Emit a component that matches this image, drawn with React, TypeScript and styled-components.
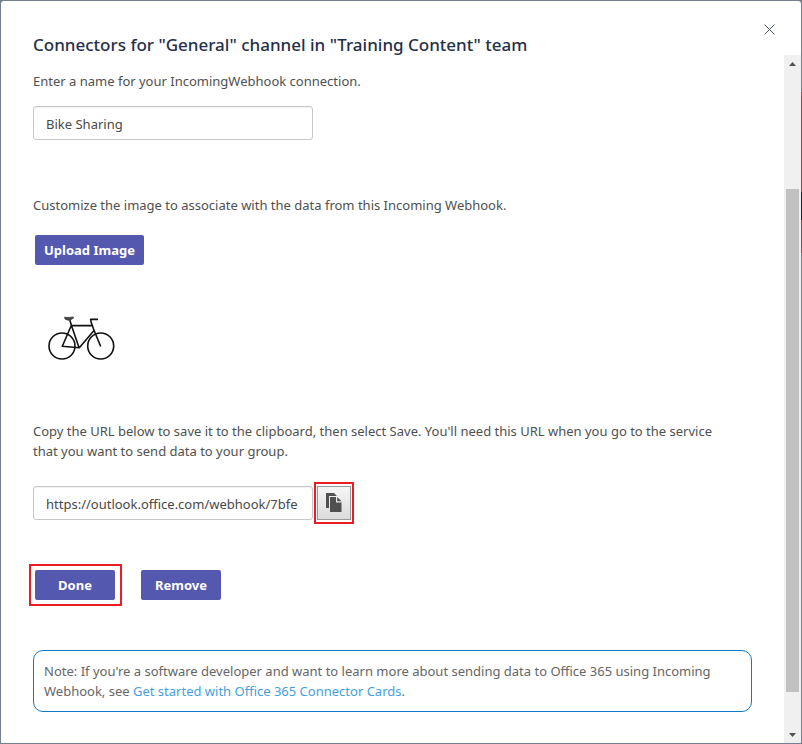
import React, { useState } from "react";
import styled, { createGlobalStyle } from "styled-components";

const GlobalStyle = createGlobalStyle`
  *, *::before, *::after { box-sizing: border-box; }
  body { margin: 0; }
  body, button, input {
    font-family: "Noto Sans", "Open Sans", sans-serif;
    font-size: 13px;
    line-height: 20px;
  }
`;

const Backdrop = styled.div`
  display: flex;
  min-height: 100vh;
  padding: 1px;
  background:
    linear-gradient(transparent 0 92px, #7b5560 92px 192px, #17212c 192px 220px, #6d5560 220px 253px, transparent 253px)
      right / 1px 100% no-repeat,
    #757f8d;
`;

const Dialog = styled.main`
  flex: 1;
  min-width: 0;
  display: flex;
  flex-direction: column;
  background: #fff;
  border-radius: 3px 3px 0 0;
`;

const Header = styled.header`
  display: flex;
  justify-content: space-between;
  align-items: flex-start;
  padding: 16px 20px 0 32px;
`;

const Title = styled.h1`
  margin: 18px 0 0;
  font-size: 17px;
  line-height: 20px;
  font-weight: 500;
  color: #252f49;
`;

const CloseButton = styled.button`
  display: grid;
  place-items: center;
  width: 24px;
  height: 24px;
  padding: 0;
  border: 0;
  background: none;
  color: #4c5570;
`;

const Body = styled.div`
  flex: 1;
  display: flex;
`;

const Form = styled.form`
  flex: 1;
  min-width: 0;
  display: flex;
  flex-direction: column;
  align-items: flex-start;
  padding: 16px 32px 31px;
  color: #505050;
`;

const Field = styled.div`
  display: flex;
  flex-direction: column;
  align-items: flex-start;
  gap: 15px;
  margin-bottom: 55px;
`;

const Text = styled.p`
  margin: 0 0 20px;
`;

const TextInput = styled.input`
  width: 280px;
  height: 34px;
  padding: 2px 12px 0;
  border: 1px solid #c8c8c8;
  border-radius: 3px;
  background: #fff;
  box-shadow: inset 0 1px 1px #f0f0f0;
  color: #484848;
`;

const PrimaryButton = styled.button<{ $wide?: boolean }>`
  height: 30px;
  width: ${(p) => (p.$wide ? "80px" : "auto")};
  padding: 0 9px;
  border: 0;
  border-radius: 2px;
  background: #5558af;
  color: #fff;
  font-weight: 700;
  white-space: nowrap;
`;

const UploadButton = styled(PrimaryButton)`
  margin-left: 2px;
`;

const Preview = styled.div`
  margin: 45px 0 55px 12px;
  height: 56px;
`;

const UrlText = styled.label`
  display: block;
  max-width: 700px;
  margin-bottom: 21px;
`;

const UrlRow = styled.div`
  display: flex;
  align-items: center;
  gap: 1px;
  margin-bottom: 40px;
`;

const Callout = styled.span<{ $pad: string }>`
  display: flex;
  border: 2px solid #ec1c24;
  padding: ${(p) => p.$pad};
`;

const CopyButton = styled.button`
  display: grid;
  place-items: center;
  width: 34px;
  height: 34px;
  padding: 0;
  border: 1px solid #999;
  background: linear-gradient(#f5f5f5, #dcdcdc);
`;

const Actions = styled.div`
  display: flex;
  align-items: center;
  gap: 19px;
  margin: 0 0 44px -4px;
`;

const Note = styled.aside`
  width: 100%;
  padding: 10px;
  border: 1px solid #0f78c8;
  border-radius: 10px;
  color: #666;
`;

const NoteLink = styled.a`
  color: #459fde;
  text-decoration: none;
`;

const Scrollbar = styled.div`
  display: flex;
  flex-direction: column;
  width: 17px;
  background: #f0f0f0;
`;

const ScrollArrow = styled.div`
  display: grid;
  place-items: center;
  height: 17px;
`;

const Track = styled.div`
  flex: 1;
  display: grid;
  grid-template-rows: 117fr 503fr 34fr;
  padding: 0 2px;
`;

const Thumb = styled.div`
  grid-row: 2;
  background: #c1c1c1;
`;

const Bicycle = () => (
  <svg width="72" height="56" viewBox="45 310 72 56" role="img" aria-label="Bicycle" fill="none" stroke="#111">
    <g strokeWidth="1.6">
      <circle cx="62" cy="346" r="13" />
      <circle cx="100.7" cy="346" r="13" />
    </g>
    <path
      d="M71 325.6H93M71.3 325.5L62.3 346.3L79.3 347.7L94 330.5M69.3 318.5L72.3 328L79 347.5M98 319.4H90.6L91.2 322.3L93.5 329L100.7 346.5"
      strokeWidth="1.6"
      strokeLinejoin="round"
    />
    <path d="M64.7 317.2Q68 318 73.3 317Q74 318.6 71.5 319L70.3 320.4Q66.5 320 65 318.9Z" fill="#444" stroke="#444" strokeWidth="1" />
  </svg>
);

const CopyIcon = () => (
  <svg width="16" height="20" viewBox="0 0 16 20" aria-hidden="true">
    <path d="M0 0H8L10.5 2.5V3H3V15H0Z" fill="#505050" />
    <path d="M4 4H10V9.5H15.5V19H4Z" fill="#505050" />
    <path d="M11.2 4L15.5 8.3H11.2Z" fill="#505050" />
  </svg>
);

const Arrow = ({ down = false }: { down?: boolean }) => (
  <svg width="7" height="4" viewBox="0 0 7 4" aria-hidden="true">
    <path d={down ? "M0 0H7L3.5 4Z" : "M0 4H7L3.5 0Z"} fill="#505050" />
  </svg>
);

export default function App() {
  const [name, setName] = useState("Bike Sharing");
  return (
    <>
      <GlobalStyle />
      <Backdrop>
        <Dialog>
          <Header>
            <Title>Connectors for "General" channel in "Training Content" team</Title>
            <CloseButton type="button" aria-label="Close">
              <svg width="11" height="11" viewBox="0 0 11 11" aria-hidden="true">
                <path d="M.5 .5L10.5 10.5M10.5 .5L.5 10.5" stroke="currentColor" />
              </svg>
            </CloseButton>
          </Header>
          <Body>
            <Form onSubmit={(e) => e.preventDefault()}>
              <Field>
                <label htmlFor="name">Enter a name for your IncomingWebhook connection.</label>
                <TextInput id="name" value={name} onChange={(e) => setName(e.target.value)} />
              </Field>
              <Text>Customize the image to associate with the data from this Incoming Webhook.</Text>
              <UploadButton type="button">Upload Image</UploadButton>
              <Preview>
                <Bicycle />
              </Preview>
              <UrlText htmlFor="url">
                Copy the URL below to save it to the clipboard, then select Save. You'll need this URL when you go to
                the service that you want to send data to your group.
              </UrlText>
              <UrlRow>
                <TextInput id="url" readOnly value="https://outlook.office.com/webhook/7bfe" />
                <Callout $pad="2px 1px">
                  <CopyButton type="button" aria-label="Copy URL">
                    <CopyIcon />
                  </CopyButton>
                </Callout>
              </UrlRow>
              <Actions>
                <Callout $pad="4px 5px 4px 4px">
                  <PrimaryButton $wide type="submit">Done</PrimaryButton>
                </Callout>
                <PrimaryButton $wide type="button">Remove</PrimaryButton>
              </Actions>
              <Note>
                Note: If you're a software developer and want to learn more about sending data to Office 365 using
                Incoming Webhook, see <NoteLink href="#connector-cards">Get started with Office 365 Connector Cards</NoteLink>.
              </Note>
            </Form>
            <Scrollbar aria-hidden="true">
              <ScrollArrow>
                <Arrow />
              </ScrollArrow>
              <Track>
                <Thumb />
              </Track>
              <ScrollArrow>
                <Arrow down />
              </ScrollArrow>
            </Scrollbar>
          </Body>
        </Dialog>
      </Backdrop>
    </>
  );
}
